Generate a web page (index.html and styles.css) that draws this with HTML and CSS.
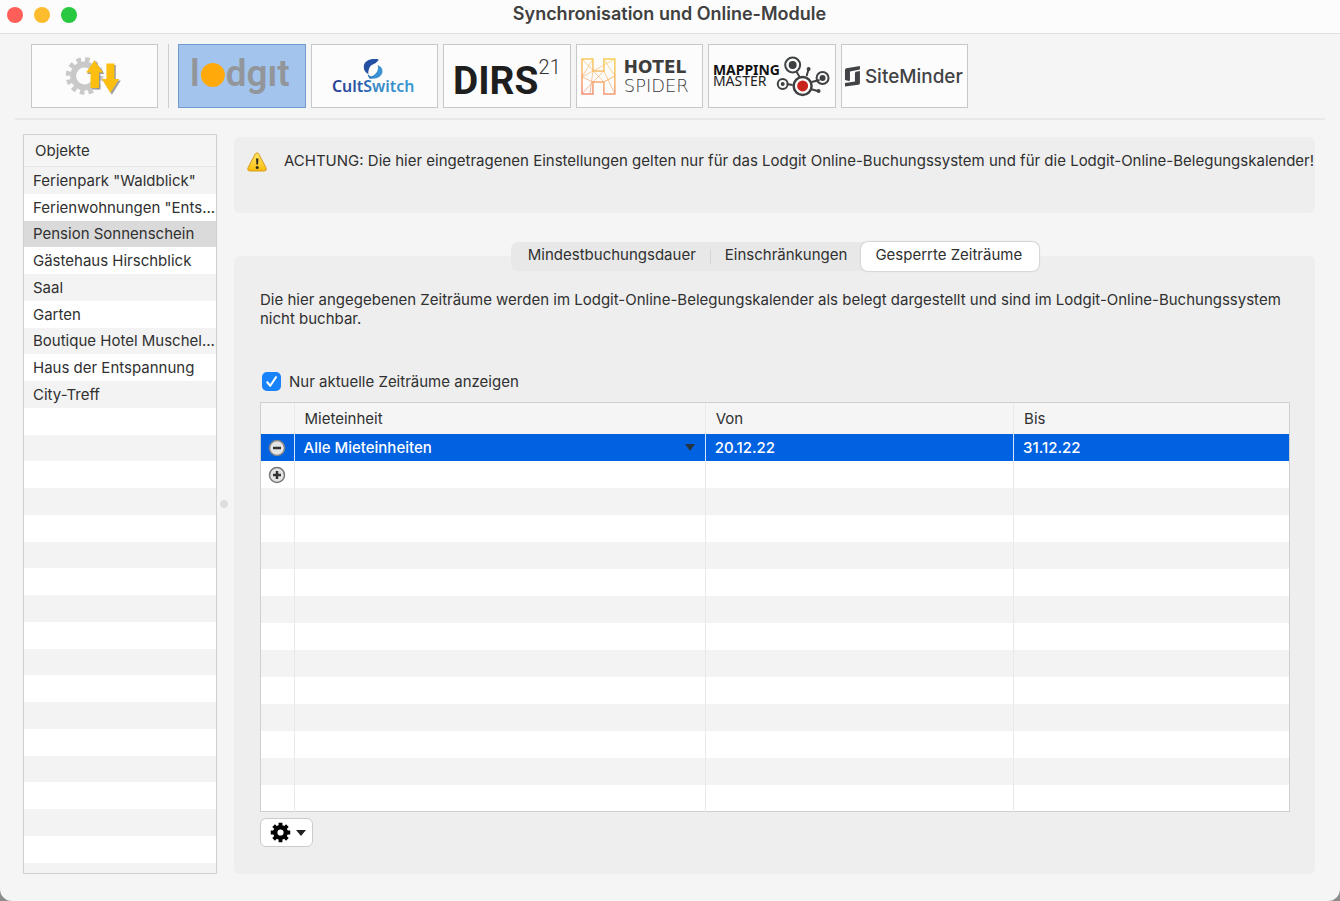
FILE: index.html
```html
<!DOCTYPE html>
<html lang="de">
<head>
<meta charset="utf-8">
<title>Synchronisation und Online-Module</title>
<link rel="stylesheet" href="styles.css">
</head>
<body>
<div class="window">
  <header class="titlebar">
    <div class="lights">
      <button class="light light-close" aria-label="Schließen"></button>
      <button class="light light-min" aria-label="Minimieren"></button>
      <button class="light light-max" aria-label="Maximieren"></button>
    </div>
    <h1 class="title">Synchronisation und Online-Module</h1>
  </header>

  <nav class="toolbar" aria-label="Module">
    <button class="module module-sync" aria-label="Synchronisation">
      <svg class="logo" viewBox="0 0 126 62">
        <circle cx="53" cy="31" r="11.5" fill="none" stroke="#c9c9c9" stroke-width="6"/>
        <circle cx="53" cy="31" r="16.5" fill="none" stroke="#c9c9c9" stroke-width="5" stroke-dasharray="4.6 4.04"/>
        <g fill="#777" opacity=".7"><path d="M64.500 17l8.500 12h-4v15.500h-8.500V29h-5z"/><path d="M76 20h8.500v15.500h5L80.500 50l-9-14.500H76z"/></g>
        <g fill="#fdbf0f"><path d="M63 15.500l8.500 12h-4V43H59V27.500h-4.500z"/><path d="M75 18.500h8v15.500h5L79 48l-8.500-14H75z"/></g>
      </svg>
    </button>
    <div class="modules">
      <button class="module module-active" aria-label="Lodgit">
        <svg class="logo" viewBox="0 0 126 62">
          <g class="t-lodgit"><text x="11" y="41">l</text><text x="47" y="41">dgıt</text></g>
          <circle cx="34" cy="30" r="12" fill="#ffa90a"/>
        </svg>
      </button>
      <button class="module" aria-label="CultSwitch">
        <svg class="logo" viewBox="0 0 126 62">
          <defs>
            <linearGradient id="cult" x1="0" x2="1"><stop offset="0" stop-color="#263f91"/><stop offset=".4" stop-color="#2a5fae"/><stop offset=".5" stop-color="#3586c4"/><stop offset="1" stop-color="#3b99d3"/></linearGradient>
          </defs>
          <path d="M67 14.500C60 13 52 15 52 22c0 3 1.500 5.500 4.500 7 0-7 3.500-10.500 10.500-14.500z" fill="#2350a2"/>
          <path d="M58 15h9l-3 3-8 4z" fill="#2350a2"/>
          <path d="M66 20c5 2 6 7 3.500 10-3 4-8 4-12.500 3.500C63 30 67.500 27 66 20z" fill="#3a93d0"/>
          <path d="M56 29c1.500 2.500 4 3 7 2l-4 2.500c-2-.5-3-2-3-4.500z" fill="#2f78bd"/>
          <text class="t-cult" x="20" y="47" fill="url(#cult)">CultSwitch</text>
        </svg>
      </button>
      <button class="module" aria-label="DIRS21">
        <svg class="logo" viewBox="0 0 126 62">
          <text class="t-dirs" x="9" y="49">DIRS</text><text class="t-dirs-num" x="95" y="29">21</text>
        </svg>
      </button>
      <button class="module" aria-label="Hotel Spider">
        <svg class="logo" viewBox="0 0 126 62">
          <defs><linearGradient id="spider" x1=".3" y1="1" x2=".6" y2="0"><stop offset="0" stop-color="#f49078"/><stop offset=".5" stop-color="#f6b36b"/><stop offset="1" stop-color="#f7cf5a"/></linearGradient></defs>
          <path d="M5 14h11v12h11V14h11v35H27V37H16v12H5z" fill="none" stroke="url(#spider)" stroke-width="1.500"/>
          <path d="M5 14l22 23M5 32l11-6 22-12M5 49l11-12 11-11M16 14L5 32l11 5M27 14l11 17-11 6M38 49L27 26M16 26l-3 23M27 37l11-6" fill="none" stroke="url(#spider)" stroke-width=".7"/>
          <text class="t-hotel" x="47" y="28">HOTEL</text><text class="t-spider" x="47" y="47">SPIDER</text>
        </svg>
      </button>
      <button class="module" aria-label="Mapping Master">
        <svg class="logo" viewBox="0 0 126 62">
          <text class="t-map" x="4" y="30">MAPPING</text><text class="t-master" x="4" y="41">MASTER</text>
          <g fill="none" stroke="#3e4042" stroke-width="2">
            <path d="M88 27l3 5M98 31l2-7M103 37l8-2M102 44l7 2M84 40l-6-1"/>
            <circle cx="84" cy="20" r="7.500"/><circle cx="94" cy="41" r="9" stroke-width="2.500"/>
            <circle cx="114" cy="33" r="6"/><circle cx="74" cy="39" r="5"/>
          </g>
          <g fill="#3e4042"><circle cx="84" cy="20" r="4"/><circle cx="114" cy="33" r="3"/><circle cx="74" cy="39" r="2"/><circle cx="100" cy="24" r="2"/><circle cx="110" cy="46" r="2"/></g>
          <circle cx="94" cy="41" r="5.500" fill="#c8231c"/>
        </svg>
      </button>
      <button class="module" aria-label="SiteMinder">
        <svg class="logo" viewBox="0 0 126 62">
          <path d="M3 25q0-1.500 1.500-1.700L18 21v3.500l-10 2V35q0 1-1 1l-4-1zM18 26v12q0 1.500-1.500 1.700L3 41.500V38l10-1.500V28.500q0-1.500 1-1.700z" fill="#414346"/>
          <text class="t-site" x="23" y="38">SiteMinder</text>
        </svg>
      </button>
    </div>
  </nav>

  <div class="content">
    <aside class="sidebar">
      <h2 class="list-head">Objekte</h2>
      <ul class="list">
        <li class="item"><button class="item-button">Ferienpark "Waldblick"</button></li>
        <li class="item"><button class="item-button">Ferienwohnungen "Ents...</button></li>
        <li class="item item-selected"><button class="item-button" aria-current="true">Pension Sonnenschein</button></li>
        <li class="item"><button class="item-button">Gästehaus Hirschblick</button></li>
        <li class="item"><button class="item-button">Saal</button></li>
        <li class="item"><button class="item-button">Garten</button></li>
        <li class="item"><button class="item-button">Boutique Hotel Muschel...</button></li>
        <li class="item"><button class="item-button">Haus der Entspannung</button></li>
        <li class="item"><button class="item-button">City-Treff</button></li>
        <li class="item"></li><li class="item"></li><li class="item"></li><li class="item"></li><li class="item"></li><li class="item"></li>
        <li class="item"></li><li class="item"></li><li class="item"></li><li class="item"></li><li class="item"></li><li class="item"></li>
        <li class="item"></li><li class="item"></li><li class="item"></li><li class="item"></li><li class="item"></li><li class="item item-cut"></li>
      </ul>
    </aside>
    <div class="splitter"><span class="grip"></span></div>

    <main class="main">
      <section class="notice">
        <svg class="warning" viewBox="0 0 20 20">
          <defs><linearGradient id="warn" x2="0" y2="1"><stop offset="0" stop-color="#ffe66d"/><stop offset="1" stop-color="#f9bd0c"/></linearGradient></defs>
          <path d="M8.300 1.800q1.700-2 3.400 0l7.300 14q1 3-1.500 3.200h-15Q0 18.800 1 15.800z" fill="url(#warn)" stroke="#d99b1c"/>
          <path d="M9 6.500h2.400l-.4 6H9.400z" fill="#2d2a1c"/><circle cx="10.200" cy="15.500" r="1.500" fill="#2d2a1c"/>
        </svg>
        <p class="notice-text">ACHTUNG: Die hier eingetragenen Einstellungen gelten nur für das Lodgit Online-Buchungssystem und für die Lodgit-Online-Belegungskalender!</p>
      </section>

      <section class="panel">
        <div class="tabs" role="tablist">
          <button class="tab" role="tab">Mindestbuchungsdauer</button>
          <span class="tab-line"></span>
          <button class="tab" role="tab">Einschränkungen</button>
          <button class="tab tab-active" role="tab" aria-selected="true">Gesperrte Zeiträume</button>
        </div>
        <p class="intro">Die hier angegebenen Zeiträume werden im Lodgit-Online-Belegungskalender als belegt dargestellt und sind im Lodgit-Online-Buchungssystem nicht buchbar.</p>
        <div class="filter">
          <span class="check">
            <input class="check-input" type="checkbox" id="current" checked>
            <svg class="check-mark" viewBox="0 0 20 20"><path d="M5.500 10.800l3.200 3.700 6-9" fill="none" stroke="#fff" stroke-width="2.200" stroke-linecap="round" stroke-linejoin="round"/></svg>
          </span>
          <label for="current">Nur aktuelle Zeiträume anzeigen</label>
        </div>
        <div class="table-box">
          <table class="table">
            <colgroup><col class="col-action"><col class="col-unit"><col class="col-from"><col></colgroup>
            <thead><tr><th></th><th>Mieteinheit</th><th>Von</th><th>Bis</th></tr></thead>
            <tbody>
              <tr class="row-selected">
                <td><button class="row-button" aria-label="Entfernen"><svg class="row-icon" viewBox="0 0 18 18"><circle cx="9" cy="9" r="7.500" fill="#e4e4e4" stroke="#858585" stroke-width="1.500"/><path d="M5 9h8" stroke="#333" stroke-width="2.500"/></svg></button></td>
                <td><div class="unit"><select class="unit-select" aria-label="Mieteinheit"><option>Alle Mieteinheiten</option></select><svg class="unit-arrow" viewBox="0 0 12 9"><path d="M1 1h10L6 8z" fill="#273444"/></svg></div></td>
                <td>20.12.22</td><td>31.12.22</td>
              </tr>
              <tr>
                <td><button class="row-button" aria-label="Hinzufügen"><svg class="row-icon" viewBox="0 0 18 18"><circle cx="9" cy="9" r="7.500" fill="#e4e4e4" stroke="#777" stroke-width="1.500"/><path d="M5 9h8M9 5v8" stroke="#333" stroke-width="2.500"/></svg></button></td>
                <td></td><td></td><td></td>
              </tr>
              <tr><td></td><td></td><td></td><td></td></tr>
              <tr><td></td><td></td><td></td><td></td></tr>
              <tr><td></td><td></td><td></td><td></td></tr>
              <tr><td></td><td></td><td></td><td></td></tr>
              <tr><td></td><td></td><td></td><td></td></tr>
              <tr><td></td><td></td><td></td><td></td></tr>
              <tr><td></td><td></td><td></td><td></td></tr>
              <tr><td></td><td></td><td></td><td></td></tr>
              <tr><td></td><td></td><td></td><td></td></tr>
              <tr><td></td><td></td><td></td><td></td></tr>
              <tr><td></td><td></td><td></td><td></td></tr>
              <tr><td></td><td></td><td></td><td></td></tr>
            </tbody>
          </table>
        </div>
        <button class="actions" aria-label="Aktionen">
          <svg class="gear" viewBox="0 0 22 22">
            <circle cx="11" cy="11" r="5.500" fill="none" stroke="#000" stroke-width="4.500"/>
            <path d="M11 .8v4M11 17.200v4M.8 11h4M17.200 11h4M3.800 3.800l3 3M15.200 15.200l3 3M3.800 18.200l3-3M15.200 6.800l3-3" stroke="#000" stroke-width="4"/>
          </svg>
          <svg class="gear-arrow" viewBox="0 0 10 6"><path d="M0 0h10L5 6z" fill="#222"/></svg>
        </button>
      </section>
    </main>
  </div>
</div>
</body>
</html>
```
FILE: styles.css
```css
* { box-sizing: border-box; }
body {
  margin: 0;
  background: #8c8c8c;
  color: #303030;
  font: 15px/19px Inter, "Liberation Sans", sans-serif;
}
button, select { font: inherit; color: inherit; padding: 0; border: 0; background: none; }
h1, h2, p, ul { margin: 0; padding: 0; }
.window {
  display: flex;
  flex-direction: column;
  height: 100vh;
  min-height: 700px;
  background: #f5f5f5;
  border-radius: 0 0 12px 12px;
  overflow: hidden;
}

/* Title bar */
.titlebar {
  display: grid;
  grid-template-columns: 1fr auto 1fr;
  align-items: start;
  height: 34px;
  padding: 4px 8px 0 7px;
  background: #fcfcfc;
  border-bottom: 1px solid #dedede;
}
.lights { display: flex; gap: 11px; padding-top: 3px; }
.light { width: 16px; height: 16px; border-radius: 50%; }
.light-close { background: #ff5f58; }
.light-min { background: #fdbc2e; }
.light-max { background: #28c840; }
.title { font-size: 18px; line-height: 20px; font-weight: 600; color: #404040; }

/* Toolbar */
.toolbar {
  display: flex;
  margin: 0 15px;
  padding: 10px 0 10px 16px;
  border-bottom: 2px solid #e8e8e8;
}
.module { height: 64px; border: 1px solid #c8c8c8; background: #fcfcfc; }
.module-sync { width: 127px; }
.module-active { background: #a2c4ed; border-color: #6f9bd0; }
.modules {
  display: grid;
  grid-template-columns: repeat(6, 1fr);
  gap: 5px;
  width: 800px;
  margin-left: 10px;
  padding-left: 9px;
  border-left: 1px solid #cdcdcd;
}
.logo { display: block; width: 100%; height: 62px; }
.t-lodgit { font: 600 37px Roboto, sans-serif; fill: #929599; }
.t-cult { font: 600 16px "Noto Sans", sans-serif; }
.t-dirs { font: 700 39px Roboto, sans-serif; fill: #1e1e1e; }
.t-dirs-num { font: 300 20px Roboto, sans-serif; fill: #333; }
.t-hotel { font: 700 17px "DejaVu Sans", sans-serif; fill: #3d3d3d; }
.t-spider { font: 200 18px "DejaVu Sans", sans-serif; fill: #3a3a3a; }
.t-map { font: 700 14px "Noto Sans", sans-serif; fill: #111; }
.t-master { font: 400 14px "Noto Sans", sans-serif; fill: #222; }
.t-site { font: 500 19px Inter, sans-serif; fill: #414346; }

.content { display: flex; flex: 1; min-height: 0; padding: 14px 25px 27px 23px; }

/* Object list */
.sidebar {
  display: flex;
  flex-direction: column;
  width: 194px;
  border: 1px solid #d0d0d0;
  background: #fff;
}
.list-head {
  height: 32px;
  padding: 6px 11px 0;
  background: #f5f5f5;
  border-bottom: 1px solid #e6e6e6;
  font-size: 15px;
  font-weight: 400;
}
.list { display: flex; flex: 1; flex-direction: column; min-height: 0; list-style: none; }
.item { display: flex; flex: 10 1 0; min-height: 0; }
.item:nth-child(odd) { background: #f3f3f3; }
.item-cut { flex-grow: 4; }
.item.item-selected { background: #dadada; }
.item-button { padding-left: 9px; text-align: left; white-space: nowrap; }
.splitter { display: flex; align-items: center; justify-content: center; width: 17px; padding-right: 3px; }
.grip { width: 8px; height: 8px; border-radius: 50%; background: #dedede; }

/* Main area */
.main { display: flex; flex: 1; flex-direction: column; min-width: 0; padding-top: 3px; }
.notice {
  display: flex;
  gap: 16px;
  min-height: 76px;
  padding: 14px 0 14px 12px;
  background: #eee;
  border-radius: 6px;
}
.warning { flex: none; width: 22px; height: 20px; margin-top: 1px; }
.panel {
  display: flex;
  flex: 1;
  flex-direction: column;
  align-items: flex-start;
  min-height: 0;
  margin-top: 43px;
  padding: 0 25px 27px 26px;
  background: #eee;
  border-radius: 6px;
}
.tabs {
  display: flex;
  align-self: center;
  height: 29px;
  margin-top: -14px;
  background: #e8e8e8;
  border-radius: 7px;
}
.tab { padding: 0 14px 4px; border-radius: 7px; }
.tab:first-child { padding-left: 17px; }
.tab-line { width: 1px; margin: 7px 0; background: #d4d4d4; }
.tab-active { padding: 0 17px 4px 14px; background: #fff; box-shadow: 0 0 1px 1px #d4d4d4; }
.intro { margin-top: 19px; }
.filter { display: flex; align-items: center; gap: 8px; margin-top: 44px; padding-left: 2px; }
.check { display: grid; width: 19px; height: 19px; }
.check-input, .check-mark { grid-area: 1 / 1; width: 19px; height: 19px; margin: 0; }
.check-input { appearance: none; border-radius: 5px; }
.check-input:checked { background: #1982fb; }
.check-mark { pointer-events: none; }

/* Table */
.table-box {
  flex: 1;
  align-self: stretch;
  min-height: 0;
  margin-top: 11px;
  border: 1px solid #cfcfcf;
  background: #fff;
}
.table { width: 100%; height: 100%; border-collapse: collapse; table-layout: fixed; }
.col-action { width: 33px; }
.col-unit { width: 40%; }
.col-from { width: 30%; }
.table tr { height: 27px; }
.table thead tr { height: 31px; background: #f5f5f5; }
.table th { padding: 0 10px; text-align: left; font-weight: 400; }
.table td { padding: 0 9px; }
.table th + th, .table td + td { border-left: 1px solid #e9e9e9; }
.table tbody tr:nth-child(odd) { background: #f3f3f3; }
.table tbody .row-selected:nth-child(odd) { background: #0062e1; color: #fff; font-weight: 500; }
.table .row-selected td + td { border-left-color: #d5e5fb; }
.table td:first-child { padding: 0; text-align: center; }
.row-button { display: block; width: 18px; height: 18px; margin: 0 auto; }
.row-icon { display: block; width: 18px; height: 18px; }
.unit { display: grid; align-items: center; }
.unit-select, .unit-arrow { grid-area: 1 / 1; }
.unit-select { width: 100%; appearance: none; }
.unit-arrow { justify-self: end; width: 12px; height: 9px; pointer-events: none; }

.actions {
  display: flex;
  align-items: center;
  gap: 5px;
  height: 29px;
  margin-top: 6px;
  padding: 0 6px 0 9px;
  background: #fff;
  border: 1px solid #cbcbcb;
  border-radius: 6px;
}
.gear { width: 21px; height: 21px; }
.gear-arrow { width: 10px; height: 6px; }
```
